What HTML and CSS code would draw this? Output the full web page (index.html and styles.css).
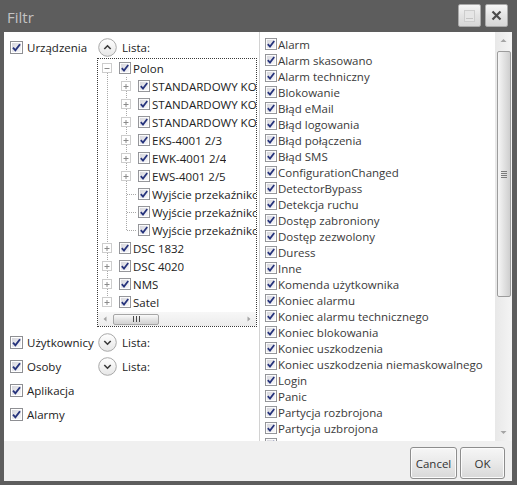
FILE: index.html
```html
<!DOCTYPE html>
<html lang="pl">
<head>
<meta charset="utf-8">
<title>Filtr</title>
<link rel="stylesheet" href="styles.css">
</head>
<body>
<svg class="defs" width="0" height="0" aria-hidden="true">
  <defs>
    <linearGradient id="cbg" x1="0" y1="0" x2="1" y2="1">
      <stop offset="0" stop-color="#d6d6dc"/>
      <stop offset="1" stop-color="#f8f8fa"/>
    </linearGradient>
    <linearGradient id="expg" x1="0" y1="0" x2="0" y2="1">
      <stop offset="0" stop-color="#ffffff"/>
      <stop offset="1" stop-color="#e6e6e6"/>
    </linearGradient>
    <symbol id="cb" viewBox="0 0 13 13">
      <rect x="0.5" y="0.5" width="12" height="12" fill="#fff" stroke="#8e8f93"/>
      <rect x="2" y="2" width="9" height="9" fill="url(#cbg)"/>
      <path d="M3 6.6 L5.4 9.3 L10 3.2" fill="none" stroke="#26337c" stroke-width="1.9"/>
    </symbol>
    <symbol id="exp-up" viewBox="0 0 19 19">
      <circle cx="9.5" cy="9.5" r="8.8" fill="url(#expg)" stroke="#a9a9a9"/>
      <path d="M6.3 11 L9.5 7.8 L12.7 11" fill="none" stroke="#3a3a3a" stroke-width="1.6"/>
    </symbol>
    <symbol id="exp-down" viewBox="0 0 19 19">
      <circle cx="9.5" cy="9.5" r="8.8" fill="url(#expg)" stroke="#a9a9a9"/>
      <path d="M6.3 8 L9.5 11.2 L12.7 8" fill="none" stroke="#3a3a3a" stroke-width="1.6"/>
    </symbol>
    <symbol id="t-minus-first" viewBox="0 0 19 18">
      <rect x="4.5" y="4.5" width="9" height="9" fill="#fff" stroke="#9a9a9a" stroke-dasharray="1 1"/>
      <path d="M6.5 9.5 H11.5" stroke="#8a8a8a"/>
      <path d="M9.5 14 V18" stroke="#a8a8a8" stroke-dasharray="1 1"/>
    </symbol>
    <symbol id="t-plus-mid" viewBox="0 0 19 18">
      <path d="M9.5 0 V4 M9.5 14 V18" stroke="#a8a8a8" stroke-dasharray="1 1"/>
      <rect x="4.5" y="4.5" width="9" height="9" fill="#fff" stroke="#9a9a9a" stroke-dasharray="1 1"/>
      <path d="M6.5 9.5 H11.5 M9 7 V12" stroke="#8a8a8a"/>
    </symbol>
    <symbol id="t-plus-last" viewBox="0 0 19 18">
      <path d="M9.5 0 V4" stroke="#a8a8a8" stroke-dasharray="1 1"/>
      <rect x="4.5" y="4.5" width="9" height="9" fill="#fff" stroke="#9a9a9a" stroke-dasharray="1 1"/>
      <path d="M6.5 9.5 H11.5 M9 7 V12" stroke="#8a8a8a"/>
    </symbol>
    <symbol id="t-vert" viewBox="0 0 19 18">
      <path d="M9.5 0 V18" stroke="#a8a8a8" stroke-dasharray="1 1"/>
    </symbol>
    <symbol id="t-leaf-mid" viewBox="0 0 19 18">
      <path d="M9.5 0 V18 M10 9.5 H19" stroke="#a8a8a8" stroke-dasharray="1 1"/>
    </symbol>
    <symbol id="t-leaf-last" viewBox="0 0 19 18">
      <path d="M9.5 0 V10 M10 9.5 H19" stroke="#a8a8a8" stroke-dasharray="1 1"/>
    </symbol>
  </defs>
</svg>

<div class="window">
  <div class="titlebar">
    <span class="title">Filtr</span>
    <div class="tbtns">
      <button class="tbtn" type="button" aria-label="Maksymalizuj">
        <svg width="11" height="12" viewBox="0 0 11 12"><rect x="0.5" y="0.5" width="10" height="11" fill="#e6e6e6" stroke="#cdcdcd"/><path d="M2 8.5 H9" stroke="#c4c4c4"/></svg>
      </button>
      <button class="tbtn" type="button" aria-label="Zamknij">
        <svg width="11" height="11" viewBox="0 0 11 11"><path d="M1.5 1.5 L9.5 9.5 M9.5 1.5 L1.5 9.5" stroke="#4a4a4a" stroke-width="2.2"/></svg>
      </button>
    </div>
  </div>

  <div class="content">
    <div class="left">
      <div class="section">
        <div class="cat"><svg class="cb"><use href="#cb"/></svg><span>Urządzenia</span></div>
        <div class="sub">
          <div class="hdr"><svg class="exp"><use href="#exp-up"/></svg><span>Lista:</span></div>
          <div class="tree">
            <div class="tree-rows">
              <div class="tr"><svg class="tc"><use href="#t-minus-first"/></svg><svg class="cb-t"><use href="#cb"/></svg><span class="tt">Polon</span></div>
              <div class="tr"><svg class="tc"><use href="#t-vert"/></svg><svg class="tc"><use href="#t-plus-mid"/></svg><svg class="cb-t"><use href="#cb"/></svg><span class="tt">STANDARDOWY KONTROLER</span></div>
              <div class="tr"><svg class="tc"><use href="#t-vert"/></svg><svg class="tc"><use href="#t-plus-mid"/></svg><svg class="cb-t"><use href="#cb"/></svg><span class="tt">STANDARDOWY KONTROLER</span></div>
              <div class="tr"><svg class="tc"><use href="#t-vert"/></svg><svg class="tc"><use href="#t-plus-mid"/></svg><svg class="cb-t"><use href="#cb"/></svg><span class="tt">STANDARDOWY KONTROLER</span></div>
              <div class="tr"><svg class="tc"><use href="#t-vert"/></svg><svg class="tc"><use href="#t-plus-mid"/></svg><svg class="cb-t"><use href="#cb"/></svg><span class="tt">EKS-4001 2/3</span></div>
              <div class="tr"><svg class="tc"><use href="#t-vert"/></svg><svg class="tc"><use href="#t-plus-mid"/></svg><svg class="cb-t"><use href="#cb"/></svg><span class="tt">EWK-4001 2/4</span></div>
              <div class="tr"><svg class="tc"><use href="#t-vert"/></svg><svg class="tc"><use href="#t-plus-mid"/></svg><svg class="cb-t"><use href="#cb"/></svg><span class="tt">EWS-4001 2/5</span></div>
              <div class="tr"><svg class="tc"><use href="#t-vert"/></svg><svg class="tc"><use href="#t-leaf-mid"/></svg><svg class="cb-t"><use href="#cb"/></svg><span class="tt">Wyjście przekaźnikowe 1</span></div>
              <div class="tr"><svg class="tc"><use href="#t-vert"/></svg><svg class="tc"><use href="#t-leaf-mid"/></svg><svg class="cb-t"><use href="#cb"/></svg><span class="tt">Wyjście przekaźnikowe 2</span></div>
              <div class="tr"><svg class="tc"><use href="#t-vert"/></svg><svg class="tc"><use href="#t-leaf-last"/></svg><svg class="cb-t"><use href="#cb"/></svg><span class="tt">Wyjście przekaźnikowe 3</span></div>
              <div class="tr"><svg class="tc"><use href="#t-plus-mid"/></svg><svg class="cb-t"><use href="#cb"/></svg><span class="tt">DSC 1832</span></div>
              <div class="tr"><svg class="tc"><use href="#t-plus-mid"/></svg><svg class="cb-t"><use href="#cb"/></svg><span class="tt">DSC 4020</span></div>
              <div class="tr"><svg class="tc"><use href="#t-plus-mid"/></svg><svg class="cb-t"><use href="#cb"/></svg><span class="tt">NMS</span></div>
              <div class="tr"><svg class="tc"><use href="#t-plus-last"/></svg><svg class="cb-t"><use href="#cb"/></svg><span class="tt">Satel</span></div>
            </div>
            <div class="hscroll">
              <svg class="harrow" width="14" height="14" viewBox="0 0 14 14"><path d="M8.5 4.5 L5.5 7 L8.5 9.5 Z" fill="#a4a4a4"/></svg>
              <div class="hthumb">
                <svg width="7" height="6" viewBox="0 0 7 6"><path d="M0.5 0 V6 M3.5 0 V6 M6.5 0 V6" stroke="#4a4a4a"/></svg>
              </div>
              <div class="hspace"></div>
              <svg class="harrow" width="14" height="14" viewBox="0 0 14 14"><path d="M5.5 4.5 L8.5 7 L5.5 9.5 Z" fill="#a4a4a4"/></svg>
            </div>
          </div>
        </div>
      </div>
      <div class="section">
        <div class="cat"><svg class="cb"><use href="#cb"/></svg><span>Użytkownicy</span></div>
        <div class="sub">
          <div class="hdr"><svg class="exp"><use href="#exp-down"/></svg><span>Lista:</span></div>
        </div>
      </div>
      <div class="section">
        <div class="cat"><svg class="cb"><use href="#cb"/></svg><span>Osoby</span></div>
        <div class="sub">
          <div class="hdr"><svg class="exp"><use href="#exp-down"/></svg><span>Lista:</span></div>
        </div>
      </div>
      <div class="section">
        <div class="cat"><svg class="cb"><use href="#cb"/></svg><span>Aplikacja</span></div>
      </div>
      <div class="section">
        <div class="cat"><svg class="cb"><use href="#cb"/></svg><span>Alarmy</span></div>
      </div>
    </div>

    <div class="list">
      <div class="items">
        <div class="li"><svg class="cb-l"><use href="#cb"/></svg><span>Alarm</span></div>
        <div class="li"><svg class="cb-l"><use href="#cb"/></svg><span>Alarm skasowano</span></div>
        <div class="li"><svg class="cb-l"><use href="#cb"/></svg><span>Alarm techniczny</span></div>
        <div class="li"><svg class="cb-l"><use href="#cb"/></svg><span>Blokowanie</span></div>
        <div class="li"><svg class="cb-l"><use href="#cb"/></svg><span>Błąd eMail</span></div>
        <div class="li"><svg class="cb-l"><use href="#cb"/></svg><span>Błąd logowania</span></div>
        <div class="li"><svg class="cb-l"><use href="#cb"/></svg><span>Błąd połączenia</span></div>
        <div class="li"><svg class="cb-l"><use href="#cb"/></svg><span>Błąd SMS</span></div>
        <div class="li"><svg class="cb-l"><use href="#cb"/></svg><span>ConfigurationChanged</span></div>
        <div class="li"><svg class="cb-l"><use href="#cb"/></svg><span>DetectorBypass</span></div>
        <div class="li"><svg class="cb-l"><use href="#cb"/></svg><span>Detekcja ruchu</span></div>
        <div class="li"><svg class="cb-l"><use href="#cb"/></svg><span>Dostęp zabroniony</span></div>
        <div class="li"><svg class="cb-l"><use href="#cb"/></svg><span>Dostęp zezwolony</span></div>
        <div class="li"><svg class="cb-l"><use href="#cb"/></svg><span>Duress</span></div>
        <div class="li"><svg class="cb-l"><use href="#cb"/></svg><span>Inne</span></div>
        <div class="li"><svg class="cb-l"><use href="#cb"/></svg><span>Komenda użytkownika</span></div>
        <div class="li"><svg class="cb-l"><use href="#cb"/></svg><span>Koniec alarmu</span></div>
        <div class="li"><svg class="cb-l"><use href="#cb"/></svg><span>Koniec alarmu technicznego</span></div>
        <div class="li"><svg class="cb-l"><use href="#cb"/></svg><span>Koniec blokowania</span></div>
        <div class="li"><svg class="cb-l"><use href="#cb"/></svg><span>Koniec uszkodzenia</span></div>
        <div class="li"><svg class="cb-l"><use href="#cb"/></svg><span>Koniec uszkodzenia niemaskowalnego</span></div>
        <div class="li"><svg class="cb-l"><use href="#cb"/></svg><span>Login</span></div>
        <div class="li"><svg class="cb-l"><use href="#cb"/></svg><span>Panic</span></div>
        <div class="li"><svg class="cb-l"><use href="#cb"/></svg><span>Partycja rozbrojona</span></div>
        <div class="li"><svg class="cb-l"><use href="#cb"/></svg><span>Partycja uzbrojona</span></div>
        <div class="li"><svg class="cb-l"><use href="#cb"/></svg><span>Pobranie ustawień</span></div>
      </div>
      <div class="vscroll">
        <svg class="varrow" width="17" height="17" viewBox="0 0 17 17"><path d="M5.5 10 L8.5 7 L11.5 10 Z" fill="#a4a4a4"/></svg>
        <div class="vthumb">
          <svg width="6" height="7" viewBox="0 0 6 7"><path d="M0 0.5 H6 M0 2.5 H6 M0 4.5 H6 M0 6.5 H6" stroke="#7a7a7a"/></svg>
        </div>
        <div class="vspace"></div>
        <svg class="varrow" width="17" height="17" viewBox="0 0 17 17"><path d="M5.5 7 L8.5 10 L11.5 7 Z" fill="#a4a4a4"/></svg>
      </div>
    </div>
  </div>

  <div class="footer">
    <button class="btn btn-cancel" type="button">Cancel</button>
    <button class="btn btn-ok" type="button">OK</button>
  </div>
</div>
</body>
</html>
```

FILE: styles.css
```css
html, body {
  margin: 0;
  padding: 0;
}

body {
  width: 517px;
  height: 485px;
  overflow: hidden;
  font-family: "Open Sans", "Noto Sans", "Liberation Sans", sans-serif;
  font-size: 11.5px;
  color: #222;
}

.defs {
  display: block;
  width: 0;
  height: 0;
  overflow: hidden;
}

.window {
  width: 517px;
  height: 485px;
  box-sizing: border-box;
  background: #5d5d5d;
  padding: 0 5px 4px 4px;
  display: flex;
  flex-direction: column;
}

/* title bar */
.titlebar {
  height: 32px;
  flex: none;
  display: flex;
  justify-content: space-between;
  align-items: flex-start;
}

.title {
  color: #c3c3c3;
  font-size: 15px;
  line-height: 20px;
  padding: 7px 0 0 3px;
}

.tbtns {
  display: flex;
  gap: 4px;
  margin: 4px 4px 0 0;
}

.tbtn {
  width: 23px;
  height: 23px;
  padding: 0;
  border: 1px solid #a9a9a9;
  border-radius: 2px;
  background: linear-gradient(#f6f6f6, #e3e3e3 50%, #d6d6d6);
  display: flex;
  align-items: center;
  justify-content: center;
}

/* content */
.content {
  height: 409px;
  flex: none;
  display: flex;
  background: #fff;
}

.left {
  width: 255px;
  flex: none;
  box-sizing: border-box;
  padding: 6px 0 0 6px;
  display: flex;
  flex-direction: column;
  gap: 6px;
}

.section {
  display: flex;
  align-items: flex-start;
}

.cat {
  width: 87px;
  height: 18px;
  flex: none;
  display: flex;
  align-items: center;
  gap: 4px;
  white-space: nowrap;
}

.cb {
  width: 13px;
  height: 13px;
  flex: none;
}

.sub {
  display: flex;
  flex-direction: column;
}

.hdr {
  height: 18px;
  display: flex;
  align-items: center;
  gap: 5px;
  padding-left: 1px;
}

.exp {
  width: 19px;
  height: 19px;
  flex: none;
}

.tree {
  margin-top: 2px;
  width: 160px;
  height: 269px;
  box-sizing: border-box;
  border: 1px dotted #3a3a3a;
  display: flex;
  flex-direction: column;
}

.tree-rows {
  flex: 1;
  overflow: hidden;
}

.tr {
  height: 18px;
  display: flex;
  align-items: center;
  white-space: nowrap;
}

.tc {
  width: 19px;
  height: 18px;
  flex: none;
}

.cb-t {
  width: 12px;
  height: 12px;
  flex: none;
  margin-left: 2px;
}

.tt {
  margin-left: 2px;
  min-width: 0;
  overflow: hidden;
  text-overflow: clip;
}

.hscroll {
  height: 14px;
  flex: none;
  display: flex;
  align-items: center;
  background: linear-gradient(#f7f7f7, #ececec);
}

.harrow {
  flex: none;
}

.hthumb {
  width: 46px;
  height: 11px;
  margin-left: 1px;
  box-sizing: border-box;
  border: 1px solid #a6a6a6;
  border-radius: 2px;
  background: linear-gradient(#fafafa, #e4e4e4 50%, #d2d2d2);
  display: flex;
  align-items: center;
  justify-content: center;
}

.hspace {
  flex: 1;
}

/* right list */
.list {
  flex: 1;
  display: flex;
  border-left: 1px solid #d2d2d2;
  min-width: 0;
}

.items {
  flex: 1;
  min-width: 0;
  padding: 4px 0 0 5px;
  overflow: hidden;
  color: #3a3a3a;
}

.li {
  height: 16px;
  display: flex;
  align-items: center;
  white-space: nowrap;
}

.cb-l {
  width: 12px;
  height: 12px;
  flex: none;
  margin-right: 1px;
}

.vscroll {
  width: 17px;
  flex: none;
  display: flex;
  flex-direction: column;
  align-items: center;
  background: linear-gradient(to right, #e8e8e8, #f4f4f4);
}

.varrow {
  flex: none;
}

.vthumb {
  width: 14px;
  height: 246px;
  margin-top: 2px;
  box-sizing: border-box;
  border: 1px solid #9c9c9c;
  border-radius: 2px;
  background: linear-gradient(to right, #f6f6f6, #e2e2e2 50%, #cfcfcf);
  display: flex;
  align-items: center;
  justify-content: center;
}

.vspace {
  flex: 1;
}

/* footer */
.footer {
  height: 40px;
  flex: none;
  box-sizing: border-box;
  background: #f0f0f0;
  display: flex;
  justify-content: flex-end;
  align-items: flex-start;
  gap: 3px;
  padding: 6px 7px 0 0;
}

.btn {
  height: 32px;
  padding: 0;
  border: 1px solid #8d8d8d;
  border-radius: 3px;
  background: linear-gradient(#f6f6f6, #e9e9e9 50%, #d8d8d8);
  box-shadow: inset 0 0 0 1px #fbfbfb;
  font-family: "Open Sans", "Noto Sans", "Liberation Sans", sans-serif;
  font-size: 11.5px;
  color: #333;
}

.btn-cancel {
  width: 47px;
}

.btn-ok {
  width: 45px;
}
```
